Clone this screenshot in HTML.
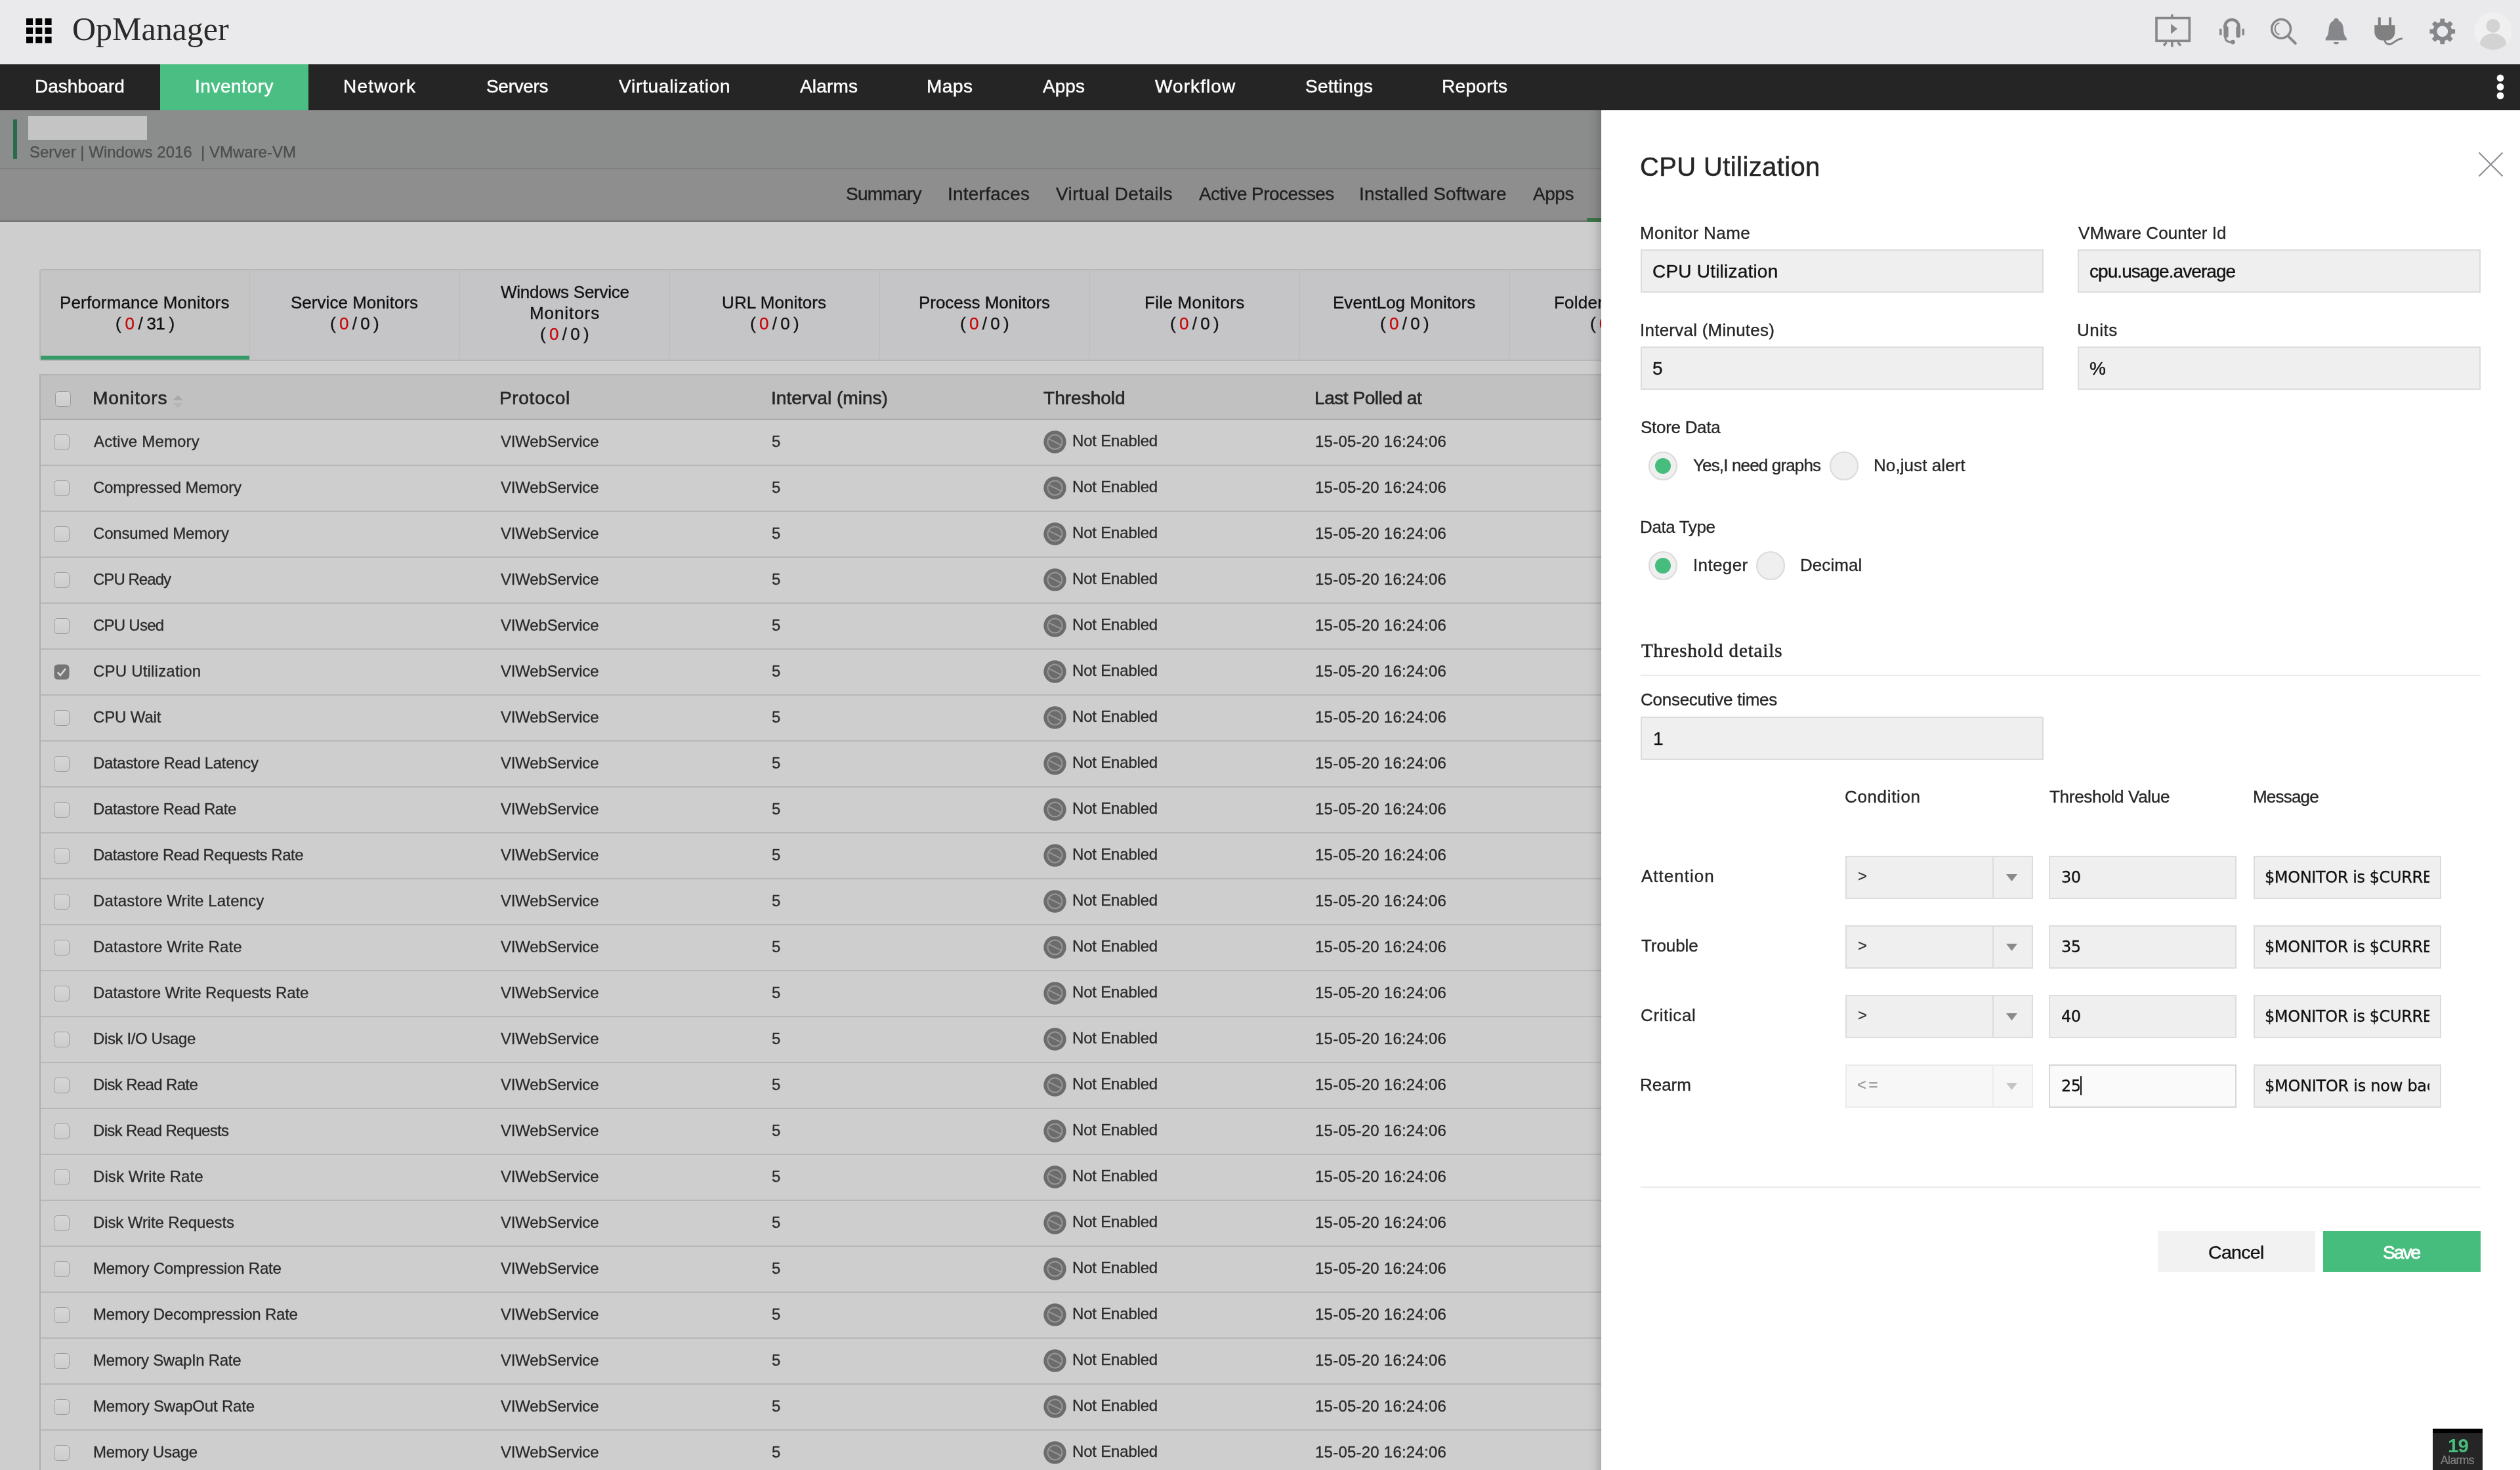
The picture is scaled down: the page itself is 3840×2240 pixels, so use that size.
<!DOCTYPE html>
<html lang="en"><head><meta charset="utf-8"><title>OpManager - CPU Utilization</title>
<style>
html,body{margin:0;padding:0}
body{width:3840px;height:2240px;position:relative;overflow:hidden;background:#cecece;font-family:"Liberation Sans",sans-serif;color:#222}
.a{position:absolute;box-sizing:border-box}
.t{will-change:transform;position:absolute;white-space:pre;line-height:1;margin:0;padding:0;font-weight:400}
svg.a{overflow:visible}
.serif{font-family:"Liberation Serif",serif}
.deja{font-family:"DejaVu Sans","Liberation Sans",sans-serif}
a.t{text-decoration:none}
</style></head>
<body>
<header>
<div class="a" style="left:0px;top:0px;width:3840px;height:97.7px;background:#eaeaec"></div>
<svg class="a" style="left:39.8px;top:28.2px" width="40" height="40" viewBox="0 0 40 40" fill="#000"><rect x="0" y="0" width="10" height="10"/><rect x="14.3" y="0" width="10" height="10"/><rect x="28.6" y="0" width="10" height="10"/><rect x="0" y="13.9" width="10" height="10"/><rect x="14.3" y="13.9" width="10" height="10"/><rect x="28.6" y="13.9" width="10" height="10"/><rect x="0" y="27.8" width="10" height="10"/><rect x="14.3" y="27.8" width="10" height="10"/><rect x="28.6" y="27.8" width="10" height="10"/></svg>
<span class="t serif" style="left:109.7px;top:19.2px;font-size:50px;letter-spacing:-0.03px;color:#2a2a2a;">OpManager</span>
<svg class="a" style="left:3270px;top:0" width="570" height="97" viewBox="3270 0 570 97"><g fill="none" stroke="#85878b"><rect x="3286" y="27.500" width="50.300" height="34.800" stroke-width="3.600"/><path d="M3309.800 22v4M3309.800 64v7.500M3301.500 64.500l-4.500 5M3318.500 64.500l4.500 5" stroke-width="3.600"/></g><path d="M3308 36.300v15.400l9.900 -7.700z" fill="#85878b"/><g fill="none" stroke="#85878b"><path d="M3390.300 43V40.700a10.600 10.600 0 0 1 21.200 0V43" stroke-width="4.500"/><path d="M3383.800 43.700v9.900M3418.200 43.700v9.900" stroke-width="3.500"/><path d="M3390.800 56c0 5.500 3.500 8.200 9.500 8.200" stroke-width="3"/></g><rect x="3388.400" y="39.800" width="7.200" height="17.800" rx="3" fill="#85878b"/><rect x="3407.300" y="39.800" width="6.600" height="17.800" rx="3" fill="#85878b"/><circle cx="3402.400" cy="64.100" r="3.400" fill="#85878b"/><g fill="none" stroke="#85878b"><circle cx="3476.100" cy="43.900" r="14.400" stroke-width="3.500"/><path d="M3473.300 34.800a9.400 9.400 0 0 0 0 18" stroke-width="2.200"/><path d="M3487.500 55.800L3497.800 66" stroke-width="4" stroke-linecap="round"/></g><path fill="#85878b" d="M3559.800 27.800c2.300 0 4 1.700 4.200 3.900c4.300 1.700 6.500 6.200 6.900 11.800c0.500 7.800 1.700 11.600 4.900 14.300v3.800h-32v-3.800c3.200 -2.700 4.400 -6.500 4.900 -14.300c0.400 -5.600 2.600 -10.100 6.900 -11.800c0.200 -2.200 1.900 -3.900 4.200 -3.900zM3555.900 64.100h8a4 3.500 0 0 1 -8 0z"/><g fill="#808080"><rect x="3623.800" y="26.400" width="4" height="13"/><rect x="3640.100" y="26.400" width="4" height="13"/><path d="M3618.300 38.300h31.200v10.500c0 6.500 -4.500 11.500 -10.500 12.800h-10.200c-6 -1.300 -10.500 -6.300 -10.500 -12.800z"/></g><path d="M3633.500 60.500c1 4.500 3.500 7.300 8 7c6.500 -0.500 9 -8.500 19.500 -8.600" fill="none" stroke="#808080" stroke-width="2.800"/><path fill-rule="evenodd" fill="#85878b" d="M3718.19 33.75L3718.48 28.58L3725.12 28.58L3725.41 33.75L3729.25 35.34L3733.11 31.90L3737.80 36.59L3734.36 40.45L3735.95 44.29L3741.12 44.58L3741.12 51.22L3735.95 51.51L3734.36 55.35L3737.80 59.21L3733.11 63.90L3729.25 60.46L3725.41 62.05L3725.12 67.22L3718.48 67.22L3718.19 62.05L3714.35 60.46L3710.49 63.90L3705.80 59.21L3709.24 55.35L3707.65 51.51L3702.48 51.22L3702.48 44.58L3707.65 44.29L3709.24 40.45L3705.80 36.59L3710.49 31.90L3714.35 35.34ZM3713.40 47.90a8.40 8.40 0 1 0 16.80 0a8.40 8.40 0 1 0 -16.80 0Z"/><defs><clipPath id="avc"><circle cx="3799" cy="47.400" r="28.500"/></clipPath></defs><circle cx="3799" cy="47.400" r="28.500" fill="#f0f0f1"/><g clip-path="url(#avc)" fill="#d3d3d4"><circle cx="3799" cy="39.400" r="10.500"/><ellipse cx="3799" cy="68.400" rx="20.500" ry="17.500"/></g></svg>
</header>
<nav>
<div class="a" style="left:0px;top:97.7px;width:3840px;height:70.1px;background:#252525"></div>
<div class="a" style="left:243.8px;top:97.7px;width:226px;height:70.1px;background:#4bbe83"></div>
<a class="t" style="left:53.2px;top:118.3px;font-size:28px;letter-spacing:-0.01px;color:#fff;-webkit-text-stroke:0.45px #fff;">Dashboard</a>
<a class="t" style="left:297.2px;top:118.3px;font-size:28px;letter-spacing:0.54px;color:#fff;-webkit-text-stroke:0.45px #fff;">Inventory</a>
<a class="t" style="left:523.0px;top:118.3px;font-size:28px;letter-spacing:1.22px;color:#fff;-webkit-text-stroke:0.45px #fff;">Network</a>
<a class="t" style="left:741.0px;top:118.3px;font-size:28px;letter-spacing:-0.31px;color:#fff;-webkit-text-stroke:0.45px #fff;">Servers</a>
<a class="t" style="left:943.0px;top:118.3px;font-size:28px;letter-spacing:0.75px;color:#fff;-webkit-text-stroke:0.45px #fff;">Virtualization</a>
<a class="t" style="left:1219.0px;top:118.3px;font-size:28px;letter-spacing:0.18px;color:#fff;-webkit-text-stroke:0.45px #fff;">Alarms</a>
<a class="t" style="left:1412.0px;top:118.3px;font-size:28px;letter-spacing:0.51px;color:#fff;-webkit-text-stroke:0.45px #fff;">Maps</a>
<a class="t" style="left:1589.0px;top:118.3px;font-size:28px;letter-spacing:0.06px;color:#fff;-webkit-text-stroke:0.45px #fff;">Apps</a>
<a class="t" style="left:1760.0px;top:118.3px;font-size:28px;letter-spacing:1.09px;color:#fff;-webkit-text-stroke:0.45px #fff;">Workflow</a>
<a class="t" style="left:1989.0px;top:118.3px;font-size:28px;letter-spacing:0.26px;color:#fff;-webkit-text-stroke:0.45px #fff;">Settings</a>
<a class="t" style="left:2197.0px;top:118.3px;font-size:28px;letter-spacing:0.33px;color:#fff;-webkit-text-stroke:0.45px #fff;">Reports</a>
<svg class="a" style="left:3802px;top:111.500px" width="16" height="44" viewBox="0 0 16 44" fill="#fff"><circle cx="8" cy="7" r="5.400"/><circle cx="8" cy="20.400" r="5.400"/><circle cx="8" cy="33.900" r="5.400"/></svg>
</nav>
<section>
<div class="a" style="left:0px;top:167.8px;width:3840px;height:89px;background:#8b8d8c"></div>
<div class="a" style="left:0px;top:256.3px;width:3840px;height:2px;background:#7f8180"></div>
<div class="a" style="left:0px;top:258.2px;width:3840px;height:78px;background:#8e8e8e"></div>
<div class="a" style="left:0px;top:333px;width:3840px;height:2.7px;background:#8a8c8b"></div>
<div class="a" style="left:0px;top:335.6px;width:3840px;height:2.4px;background:#707070"></div>
<div class="a" style="left:0px;top:338px;width:3840px;height:1px;background:#d3d3d3"></div>
<div class="a" style="left:19.8px;top:182px;width:6.2px;height:60px;background:#2a6b4a"></div>
<div class="a" style="left:42.9px;top:177px;width:181.3px;height:36px;background:#c4c4c4"></div>
<span class="t" style="left:45.0px;top:219.5px;font-size:24px;color:#4d4d4d;-webkit-text-stroke:0.31px #4d4d4d;">Server | Windows 2016  | VMware-VM</span>
<a class="t" style="left:1288.5px;top:281.8px;font-size:28px;letter-spacing:-0.72px;color:#1f1f1f;-webkit-text-stroke:0.36px #1f1f1f;">Summary</a>
<a class="t" style="left:1444.0px;top:281.8px;font-size:28px;letter-spacing:0.23px;color:#1f1f1f;-webkit-text-stroke:0.36px #1f1f1f;">Interfaces</a>
<a class="t" style="left:1609.0px;top:281.8px;font-size:28px;letter-spacing:0.38px;color:#1f1f1f;-webkit-text-stroke:0.36px #1f1f1f;">Virtual Details</a>
<a class="t" style="left:1826.7px;top:281.8px;font-size:28px;letter-spacing:-0.56px;color:#1f1f1f;-webkit-text-stroke:0.36px #1f1f1f;">Active Processes</a>
<a class="t" style="left:2071.0px;top:281.8px;font-size:28px;letter-spacing:0.12px;color:#1f1f1f;-webkit-text-stroke:0.36px #1f1f1f;">Installed Software</a>
<a class="t" style="left:2336.0px;top:281.8px;font-size:28px;letter-spacing:-0.44px;color:#1f1f1f;-webkit-text-stroke:0.36px #1f1f1f;">Apps</a>
<a class="t" style="left:2438.0px;top:281.8px;font-size:28px;letter-spacing:2.23px;color:#1f1f1f;-webkit-text-stroke:0.36px #1f1f1f;">Monitors</a>
<div class="a" style="left:2418px;top:332px;width:160px;height:5.9px;background:#3d7446"></div>
</section>
<section>
<div class="a" style="left:60.4px;top:410.3px;width:3000px;height:139.6px;background:#c5c5c7;border:2px solid #b7b7b9;border-radius:4px 0 0 4px"></div>
<div class="a" style="left:62px;top:412px;width:318.5px;height:136px;background:#c5c5c5"></div>
<div class="a" style="left:62px;top:541.7px;width:318.4px;height:6.2px;background:#359a68"></div>
<div class="a" style="left:379.6px;top:412px;width:1.6px;height:136px;background:#bcbcbe"></div>
<div class="a" style="left:699.6px;top:412px;width:1.6px;height:136px;background:#bcbcbe"></div>
<div class="a" style="left:1019.6px;top:412px;width:1.6px;height:136px;background:#bcbcbe"></div>
<div class="a" style="left:1339.6px;top:412px;width:1.6px;height:136px;background:#bcbcbe"></div>
<div class="a" style="left:1659.6px;top:412px;width:1.6px;height:136px;background:#bcbcbe"></div>
<div class="a" style="left:1979.6px;top:412px;width:1.6px;height:136px;background:#bcbcbe"></div>
<div class="a" style="left:2299.6px;top:412px;width:1.6px;height:136px;background:#bcbcbe"></div>
<div class="a" style="left:2619.6px;top:412px;width:1.6px;height:136px;background:#bcbcbe"></div>
<span class="t" style="left:91.0px;top:447.9px;font-size:26px;letter-spacing:0.14px;color:#111;-webkit-text-stroke:0.34px #111;">Performance Monitors</span>
<span class="t" style="left:175.8px;top:479.7px;font-size:26px;letter-spacing:-0.75px;color:#111;-webkit-text-stroke:0.34px #111;">( <b style="color:#c9060a;-webkit-text-stroke-color:#c9060a;font-weight:400">0</b> / 31 )</span>
<span class="t" style="left:443.3px;top:447.9px;font-size:26px;letter-spacing:0.03px;color:#111;-webkit-text-stroke:0.34px #111;">Service Monitors</span>
<span class="t" style="left:503.4px;top:479.7px;font-size:26px;letter-spacing:-0.97px;color:#111;-webkit-text-stroke:0.34px #111;">( <b style="color:#c9060a;-webkit-text-stroke-color:#c9060a;font-weight:400">0</b> / 0 )</span>
<span class="t" style="left:762.9px;top:432.0px;font-size:26px;letter-spacing:-0.24px;color:#111;-webkit-text-stroke:0.34px #111;">Windows Service</span>
<span class="t" style="left:806.6px;top:464.0px;font-size:26px;letter-spacing:0.93px;color:#111;-webkit-text-stroke:0.34px #111;">Monitors</span>
<span class="t" style="left:823.4px;top:496.0px;font-size:26px;letter-spacing:-0.97px;color:#111;-webkit-text-stroke:0.34px #111;">( <b style="color:#c9060a;-webkit-text-stroke-color:#c9060a;font-weight:400">0</b> / 0 )</span>
<span class="t" style="left:1100.2px;top:447.9px;font-size:26px;letter-spacing:0.10px;color:#111;-webkit-text-stroke:0.34px #111;">URL Monitors</span>
<span class="t" style="left:1143.4px;top:479.7px;font-size:26px;letter-spacing:-0.97px;color:#111;-webkit-text-stroke:0.34px #111;">( <b style="color:#c9060a;-webkit-text-stroke-color:#c9060a;font-weight:400">0</b> / 0 )</span>
<span class="t" style="left:1399.9px;top:447.9px;font-size:26px;letter-spacing:-0.05px;color:#111;-webkit-text-stroke:0.34px #111;">Process Monitors</span>
<span class="t" style="left:1463.4px;top:479.7px;font-size:26px;letter-spacing:-0.97px;color:#111;-webkit-text-stroke:0.34px #111;">( <b style="color:#c9060a;-webkit-text-stroke-color:#c9060a;font-weight:400">0</b> / 0 )</span>
<span class="t" style="left:1743.8px;top:447.9px;font-size:26px;letter-spacing:0.29px;color:#111;-webkit-text-stroke:0.34px #111;">File Monitors</span>
<span class="t" style="left:1783.4px;top:479.7px;font-size:26px;letter-spacing:-0.97px;color:#111;-webkit-text-stroke:0.34px #111;">( <b style="color:#c9060a;-webkit-text-stroke-color:#c9060a;font-weight:400">0</b> / 0 )</span>
<span class="t" style="left:2031.3px;top:447.9px;font-size:26px;letter-spacing:0.03px;color:#111;-webkit-text-stroke:0.34px #111;">EventLog Monitors</span>
<span class="t" style="left:2103.4px;top:479.7px;font-size:26px;letter-spacing:-0.97px;color:#111;-webkit-text-stroke:0.34px #111;">( <b style="color:#c9060a;-webkit-text-stroke-color:#c9060a;font-weight:400">0</b> / 0 )</span>
<span class="t" style="left:2367.5px;top:447.9px;font-size:26px;letter-spacing:0.24px;color:#111;-webkit-text-stroke:0.34px #111;">Folder Monitors</span>
<span class="t" style="left:2423.4px;top:479.7px;font-size:26px;letter-spacing:-0.97px;color:#111;-webkit-text-stroke:0.34px #111;">( <b style="color:#c9060a;-webkit-text-stroke-color:#c9060a;font-weight:400">0</b> / 0 )</span>
</section>
<section>
<div class="a" style="left:60.2px;top:569.8px;width:3000px;height:1700px;background:#cecece;border-left:2px solid #adadad"></div>
<div class="a" style="left:60.2px;top:569.8px;width:3000px;height:70.4px;background:#c1c1c1;border-top:2px solid #b3b3b3;border-bottom:2px solid #a9a9a9;border-left:2px solid #adadad"></div>
<div class="a" style="left:84.1px;top:595.9px;width:23.7px;height:23.8px;border:1.6px solid #9b9b9b;border-radius:5.500px;background:linear-gradient(#d6d6d6,#cdcdcd)"></div>
<span class="t" style="left:141.2px;top:592.0px;font-size:28.2px;letter-spacing:0.77px;color:#262626;-webkit-text-stroke:0.6px #262626;">Monitors</span>
<svg class="a" style="left:263px;top:601px" width="16" height="22" viewBox="0 0 16 22"><path d="M0.500 9L8 1l7.500 8z" fill="#a9a9a9"/><path d="M0.500 13L8 21l7.500 -8z" fill="#b7b7b7"/></svg>
<span class="t" style="left:761.0px;top:592.0px;font-size:28.2px;letter-spacing:0.55px;color:#262626;-webkit-text-stroke:0.6px #262626;">Protocol</span>
<span class="t" style="left:1175.0px;top:592.0px;font-size:28.2px;letter-spacing:-0.04px;color:#262626;-webkit-text-stroke:0.6px #262626;">Interval (mins)</span>
<span class="t" style="left:1590.0px;top:592.0px;font-size:28.2px;letter-spacing:-0.08px;color:#262626;-webkit-text-stroke:0.6px #262626;">Threshold</span>
<span class="t" style="left:2003.0px;top:592.0px;font-size:28.2px;letter-spacing:-0.54px;color:#262626;-webkit-text-stroke:0.6px #262626;">Last Polled at</span>
<div class="a" style="left:82.2px;top:662.2px;width:23.6px;height:23.6px;border:1.6px solid #9b9b9b;border-radius:5.500px;background:linear-gradient(#d6d6d6,#cdcdcd)"></div>
<span class="t" style="left:142.6px;top:661.4px;font-size:24px;letter-spacing:0.17px;color:#2a2a2a;-webkit-text-stroke:0.31px #2a2a2a;">Active Memory</span>
<span class="t" style="left:762.8px;top:661.4px;font-size:24px;letter-spacing:-0.19px;color:#2a2a2a;-webkit-text-stroke:0.31px #2a2a2a;">VIWebService</span>
<span class="t" style="left:1176.4px;top:661.4px;font-size:24px;color:#2a2a2a;-webkit-text-stroke:0.31px #2a2a2a;">5</span>
<svg class="a" style="left:1589.500px;top:655.7px" width="35" height="35" viewBox="0 0 35 35"><circle cx="17.500" cy="17.500" r="17.200" fill="#6c6c6c"/><circle cx="17.500" cy="17.500" r="11" fill="none" stroke="#989898" stroke-width="1.900"/><path d="M8.200 12.800L26.800 22.200" stroke="#989898" stroke-width="1.900"/></svg>
<span class="t" style="left:1634.2px;top:660.2px;font-size:24px;letter-spacing:-0.19px;color:#2a2a2a;-webkit-text-stroke:0.31px #2a2a2a;">Not Enabled</span>
<span class="t" style="left:2004.0px;top:661.4px;font-size:24px;letter-spacing:0.23px;color:#2a2a2a;-webkit-text-stroke:0.31px #2a2a2a;">15-05-20 16:24:06</span>
<div class="a" style="left:62px;top:708px;width:3000px;height:2px;background:#b7b7b7"></div>
<div class="a" style="left:82.2px;top:732.2px;width:23.6px;height:23.6px;border:1.6px solid #9b9b9b;border-radius:5.500px;background:linear-gradient(#d6d6d6,#cdcdcd)"></div>
<span class="t" style="left:141.6px;top:731.4px;font-size:24px;letter-spacing:-0.21px;color:#2a2a2a;-webkit-text-stroke:0.31px #2a2a2a;">Compressed Memory</span>
<span class="t" style="left:762.8px;top:731.4px;font-size:24px;letter-spacing:-0.19px;color:#2a2a2a;-webkit-text-stroke:0.31px #2a2a2a;">VIWebService</span>
<span class="t" style="left:1176.4px;top:731.4px;font-size:24px;color:#2a2a2a;-webkit-text-stroke:0.31px #2a2a2a;">5</span>
<svg class="a" style="left:1589.500px;top:725.7px" width="35" height="35" viewBox="0 0 35 35"><circle cx="17.500" cy="17.500" r="17.200" fill="#6c6c6c"/><circle cx="17.500" cy="17.500" r="11" fill="none" stroke="#989898" stroke-width="1.900"/><path d="M8.200 12.800L26.800 22.200" stroke="#989898" stroke-width="1.900"/></svg>
<span class="t" style="left:1634.2px;top:730.2px;font-size:24px;letter-spacing:-0.19px;color:#2a2a2a;-webkit-text-stroke:0.31px #2a2a2a;">Not Enabled</span>
<span class="t" style="left:2004.0px;top:731.4px;font-size:24px;letter-spacing:0.23px;color:#2a2a2a;-webkit-text-stroke:0.31px #2a2a2a;">15-05-20 16:24:06</span>
<div class="a" style="left:62px;top:778px;width:3000px;height:2px;background:#b7b7b7"></div>
<div class="a" style="left:82.2px;top:802.2px;width:23.6px;height:23.6px;border:1.6px solid #9b9b9b;border-radius:5.500px;background:linear-gradient(#d6d6d6,#cdcdcd)"></div>
<span class="t" style="left:141.6px;top:801.4px;font-size:24px;letter-spacing:-0.17px;color:#2a2a2a;-webkit-text-stroke:0.31px #2a2a2a;">Consumed Memory</span>
<span class="t" style="left:762.8px;top:801.4px;font-size:24px;letter-spacing:-0.19px;color:#2a2a2a;-webkit-text-stroke:0.31px #2a2a2a;">VIWebService</span>
<span class="t" style="left:1176.4px;top:801.4px;font-size:24px;color:#2a2a2a;-webkit-text-stroke:0.31px #2a2a2a;">5</span>
<svg class="a" style="left:1589.500px;top:795.7px" width="35" height="35" viewBox="0 0 35 35"><circle cx="17.500" cy="17.500" r="17.200" fill="#6c6c6c"/><circle cx="17.500" cy="17.500" r="11" fill="none" stroke="#989898" stroke-width="1.900"/><path d="M8.200 12.800L26.800 22.200" stroke="#989898" stroke-width="1.900"/></svg>
<span class="t" style="left:1634.2px;top:800.2px;font-size:24px;letter-spacing:-0.19px;color:#2a2a2a;-webkit-text-stroke:0.31px #2a2a2a;">Not Enabled</span>
<span class="t" style="left:2004.0px;top:801.4px;font-size:24px;letter-spacing:0.23px;color:#2a2a2a;-webkit-text-stroke:0.31px #2a2a2a;">15-05-20 16:24:06</span>
<div class="a" style="left:62px;top:848px;width:3000px;height:2px;background:#b7b7b7"></div>
<div class="a" style="left:82.2px;top:872.2px;width:23.6px;height:23.6px;border:1.6px solid #9b9b9b;border-radius:5.500px;background:linear-gradient(#d6d6d6,#cdcdcd)"></div>
<span class="t" style="left:141.6px;top:871.4px;font-size:24px;letter-spacing:-0.96px;color:#2a2a2a;-webkit-text-stroke:0.31px #2a2a2a;">CPU Ready</span>
<span class="t" style="left:762.8px;top:871.4px;font-size:24px;letter-spacing:-0.19px;color:#2a2a2a;-webkit-text-stroke:0.31px #2a2a2a;">VIWebService</span>
<span class="t" style="left:1176.4px;top:871.4px;font-size:24px;color:#2a2a2a;-webkit-text-stroke:0.31px #2a2a2a;">5</span>
<svg class="a" style="left:1589.500px;top:865.7px" width="35" height="35" viewBox="0 0 35 35"><circle cx="17.500" cy="17.500" r="17.200" fill="#6c6c6c"/><circle cx="17.500" cy="17.500" r="11" fill="none" stroke="#989898" stroke-width="1.900"/><path d="M8.200 12.800L26.800 22.200" stroke="#989898" stroke-width="1.900"/></svg>
<span class="t" style="left:1634.2px;top:870.2px;font-size:24px;letter-spacing:-0.19px;color:#2a2a2a;-webkit-text-stroke:0.31px #2a2a2a;">Not Enabled</span>
<span class="t" style="left:2004.0px;top:871.4px;font-size:24px;letter-spacing:0.23px;color:#2a2a2a;-webkit-text-stroke:0.31px #2a2a2a;">15-05-20 16:24:06</span>
<div class="a" style="left:62px;top:918px;width:3000px;height:2px;background:#b7b7b7"></div>
<div class="a" style="left:82.2px;top:942.2px;width:23.6px;height:23.6px;border:1.6px solid #9b9b9b;border-radius:5.500px;background:linear-gradient(#d6d6d6,#cdcdcd)"></div>
<span class="t" style="left:141.6px;top:941.4px;font-size:24px;letter-spacing:-0.75px;color:#2a2a2a;-webkit-text-stroke:0.31px #2a2a2a;">CPU Used</span>
<span class="t" style="left:762.8px;top:941.4px;font-size:24px;letter-spacing:-0.19px;color:#2a2a2a;-webkit-text-stroke:0.31px #2a2a2a;">VIWebService</span>
<span class="t" style="left:1176.4px;top:941.4px;font-size:24px;color:#2a2a2a;-webkit-text-stroke:0.31px #2a2a2a;">5</span>
<svg class="a" style="left:1589.500px;top:935.7px" width="35" height="35" viewBox="0 0 35 35"><circle cx="17.500" cy="17.500" r="17.200" fill="#6c6c6c"/><circle cx="17.500" cy="17.500" r="11" fill="none" stroke="#989898" stroke-width="1.900"/><path d="M8.200 12.800L26.800 22.200" stroke="#989898" stroke-width="1.900"/></svg>
<span class="t" style="left:1634.2px;top:940.2px;font-size:24px;letter-spacing:-0.19px;color:#2a2a2a;-webkit-text-stroke:0.31px #2a2a2a;">Not Enabled</span>
<span class="t" style="left:2004.0px;top:941.4px;font-size:24px;letter-spacing:0.23px;color:#2a2a2a;-webkit-text-stroke:0.31px #2a2a2a;">15-05-20 16:24:06</span>
<div class="a" style="left:62px;top:988px;width:3000px;height:2px;background:#b7b7b7"></div>
<svg class="a" style="left:82.200px;top:1012.2px" width="24" height="24" viewBox="0 0 24 24"><rect x="0.500" y="0.500" width="23" height="23" rx="5.500" fill="#757575"/><path d="M5.800 12.500l4.200 4.600l8 -10.200" fill="none" stroke="#d8d8d8" stroke-width="2.600"/></svg>
<span class="t" style="left:141.6px;top:1011.4px;font-size:24px;letter-spacing:0.20px;color:#2a2a2a;-webkit-text-stroke:0.31px #2a2a2a;">CPU Utilization</span>
<span class="t" style="left:762.8px;top:1011.4px;font-size:24px;letter-spacing:-0.19px;color:#2a2a2a;-webkit-text-stroke:0.31px #2a2a2a;">VIWebService</span>
<span class="t" style="left:1176.4px;top:1011.4px;font-size:24px;color:#2a2a2a;-webkit-text-stroke:0.31px #2a2a2a;">5</span>
<svg class="a" style="left:1589.500px;top:1005.7px" width="35" height="35" viewBox="0 0 35 35"><circle cx="17.500" cy="17.500" r="17.200" fill="#6c6c6c"/><circle cx="17.500" cy="17.500" r="11" fill="none" stroke="#989898" stroke-width="1.900"/><path d="M8.200 12.800L26.800 22.200" stroke="#989898" stroke-width="1.900"/></svg>
<span class="t" style="left:1634.2px;top:1010.2px;font-size:24px;letter-spacing:-0.19px;color:#2a2a2a;-webkit-text-stroke:0.31px #2a2a2a;">Not Enabled</span>
<span class="t" style="left:2004.0px;top:1011.4px;font-size:24px;letter-spacing:0.23px;color:#2a2a2a;-webkit-text-stroke:0.31px #2a2a2a;">15-05-20 16:24:06</span>
<div class="a" style="left:62px;top:1058px;width:3000px;height:2px;background:#b7b7b7"></div>
<div class="a" style="left:82.2px;top:1082.2px;width:23.6px;height:23.6px;border:1.6px solid #9b9b9b;border-radius:5.500px;background:linear-gradient(#d6d6d6,#cdcdcd)"></div>
<span class="t" style="left:141.6px;top:1081.4px;font-size:24px;letter-spacing:-0.14px;color:#2a2a2a;-webkit-text-stroke:0.31px #2a2a2a;">CPU Wait</span>
<span class="t" style="left:762.8px;top:1081.4px;font-size:24px;letter-spacing:-0.19px;color:#2a2a2a;-webkit-text-stroke:0.31px #2a2a2a;">VIWebService</span>
<span class="t" style="left:1176.4px;top:1081.4px;font-size:24px;color:#2a2a2a;-webkit-text-stroke:0.31px #2a2a2a;">5</span>
<svg class="a" style="left:1589.500px;top:1075.7px" width="35" height="35" viewBox="0 0 35 35"><circle cx="17.500" cy="17.500" r="17.200" fill="#6c6c6c"/><circle cx="17.500" cy="17.500" r="11" fill="none" stroke="#989898" stroke-width="1.900"/><path d="M8.200 12.800L26.800 22.200" stroke="#989898" stroke-width="1.900"/></svg>
<span class="t" style="left:1634.2px;top:1080.2px;font-size:24px;letter-spacing:-0.19px;color:#2a2a2a;-webkit-text-stroke:0.31px #2a2a2a;">Not Enabled</span>
<span class="t" style="left:2004.0px;top:1081.4px;font-size:24px;letter-spacing:0.23px;color:#2a2a2a;-webkit-text-stroke:0.31px #2a2a2a;">15-05-20 16:24:06</span>
<div class="a" style="left:62px;top:1128px;width:3000px;height:2px;background:#b7b7b7"></div>
<div class="a" style="left:82.2px;top:1152.2px;width:23.6px;height:23.6px;border:1.6px solid #9b9b9b;border-radius:5.500px;background:linear-gradient(#d6d6d6,#cdcdcd)"></div>
<span class="t" style="left:141.6px;top:1151.4px;font-size:24px;letter-spacing:-0.33px;color:#2a2a2a;-webkit-text-stroke:0.31px #2a2a2a;">Datastore Read Latency</span>
<span class="t" style="left:762.8px;top:1151.4px;font-size:24px;letter-spacing:-0.19px;color:#2a2a2a;-webkit-text-stroke:0.31px #2a2a2a;">VIWebService</span>
<span class="t" style="left:1176.4px;top:1151.4px;font-size:24px;color:#2a2a2a;-webkit-text-stroke:0.31px #2a2a2a;">5</span>
<svg class="a" style="left:1589.500px;top:1145.7px" width="35" height="35" viewBox="0 0 35 35"><circle cx="17.500" cy="17.500" r="17.200" fill="#6c6c6c"/><circle cx="17.500" cy="17.500" r="11" fill="none" stroke="#989898" stroke-width="1.900"/><path d="M8.200 12.800L26.800 22.200" stroke="#989898" stroke-width="1.900"/></svg>
<span class="t" style="left:1634.2px;top:1150.2px;font-size:24px;letter-spacing:-0.19px;color:#2a2a2a;-webkit-text-stroke:0.31px #2a2a2a;">Not Enabled</span>
<span class="t" style="left:2004.0px;top:1151.4px;font-size:24px;letter-spacing:0.23px;color:#2a2a2a;-webkit-text-stroke:0.31px #2a2a2a;">15-05-20 16:24:06</span>
<div class="a" style="left:62px;top:1198px;width:3000px;height:2px;background:#b7b7b7"></div>
<div class="a" style="left:82.2px;top:1222.2px;width:23.6px;height:23.6px;border:1.6px solid #9b9b9b;border-radius:5.500px;background:linear-gradient(#d6d6d6,#cdcdcd)"></div>
<span class="t" style="left:141.6px;top:1221.4px;font-size:24px;letter-spacing:-0.39px;color:#2a2a2a;-webkit-text-stroke:0.31px #2a2a2a;">Datastore Read Rate</span>
<span class="t" style="left:762.8px;top:1221.4px;font-size:24px;letter-spacing:-0.19px;color:#2a2a2a;-webkit-text-stroke:0.31px #2a2a2a;">VIWebService</span>
<span class="t" style="left:1176.4px;top:1221.4px;font-size:24px;color:#2a2a2a;-webkit-text-stroke:0.31px #2a2a2a;">5</span>
<svg class="a" style="left:1589.500px;top:1215.7px" width="35" height="35" viewBox="0 0 35 35"><circle cx="17.500" cy="17.500" r="17.200" fill="#6c6c6c"/><circle cx="17.500" cy="17.500" r="11" fill="none" stroke="#989898" stroke-width="1.900"/><path d="M8.200 12.800L26.800 22.200" stroke="#989898" stroke-width="1.900"/></svg>
<span class="t" style="left:1634.2px;top:1220.2px;font-size:24px;letter-spacing:-0.19px;color:#2a2a2a;-webkit-text-stroke:0.31px #2a2a2a;">Not Enabled</span>
<span class="t" style="left:2004.0px;top:1221.4px;font-size:24px;letter-spacing:0.23px;color:#2a2a2a;-webkit-text-stroke:0.31px #2a2a2a;">15-05-20 16:24:06</span>
<div class="a" style="left:62px;top:1268px;width:3000px;height:2px;background:#b7b7b7"></div>
<div class="a" style="left:82.2px;top:1292.2px;width:23.6px;height:23.6px;border:1.6px solid #9b9b9b;border-radius:5.500px;background:linear-gradient(#d6d6d6,#cdcdcd)"></div>
<span class="t" style="left:141.6px;top:1291.4px;font-size:24px;letter-spacing:-0.48px;color:#2a2a2a;-webkit-text-stroke:0.31px #2a2a2a;">Datastore Read Requests Rate</span>
<span class="t" style="left:762.8px;top:1291.4px;font-size:24px;letter-spacing:-0.19px;color:#2a2a2a;-webkit-text-stroke:0.31px #2a2a2a;">VIWebService</span>
<span class="t" style="left:1176.4px;top:1291.4px;font-size:24px;color:#2a2a2a;-webkit-text-stroke:0.31px #2a2a2a;">5</span>
<svg class="a" style="left:1589.500px;top:1285.7px" width="35" height="35" viewBox="0 0 35 35"><circle cx="17.500" cy="17.500" r="17.200" fill="#6c6c6c"/><circle cx="17.500" cy="17.500" r="11" fill="none" stroke="#989898" stroke-width="1.900"/><path d="M8.200 12.800L26.800 22.200" stroke="#989898" stroke-width="1.900"/></svg>
<span class="t" style="left:1634.2px;top:1290.2px;font-size:24px;letter-spacing:-0.19px;color:#2a2a2a;-webkit-text-stroke:0.31px #2a2a2a;">Not Enabled</span>
<span class="t" style="left:2004.0px;top:1291.4px;font-size:24px;letter-spacing:0.23px;color:#2a2a2a;-webkit-text-stroke:0.31px #2a2a2a;">15-05-20 16:24:06</span>
<div class="a" style="left:62px;top:1338px;width:3000px;height:2px;background:#b7b7b7"></div>
<div class="a" style="left:82.2px;top:1362.2px;width:23.6px;height:23.6px;border:1.6px solid #9b9b9b;border-radius:5.500px;background:linear-gradient(#d6d6d6,#cdcdcd)"></div>
<span class="t" style="left:141.6px;top:1361.4px;font-size:24px;letter-spacing:0.15px;color:#2a2a2a;-webkit-text-stroke:0.31px #2a2a2a;">Datastore Write Latency</span>
<span class="t" style="left:762.8px;top:1361.4px;font-size:24px;letter-spacing:-0.19px;color:#2a2a2a;-webkit-text-stroke:0.31px #2a2a2a;">VIWebService</span>
<span class="t" style="left:1176.4px;top:1361.4px;font-size:24px;color:#2a2a2a;-webkit-text-stroke:0.31px #2a2a2a;">5</span>
<svg class="a" style="left:1589.500px;top:1355.7px" width="35" height="35" viewBox="0 0 35 35"><circle cx="17.500" cy="17.500" r="17.200" fill="#6c6c6c"/><circle cx="17.500" cy="17.500" r="11" fill="none" stroke="#989898" stroke-width="1.900"/><path d="M8.200 12.800L26.800 22.200" stroke="#989898" stroke-width="1.900"/></svg>
<span class="t" style="left:1634.2px;top:1360.2px;font-size:24px;letter-spacing:-0.19px;color:#2a2a2a;-webkit-text-stroke:0.31px #2a2a2a;">Not Enabled</span>
<span class="t" style="left:2004.0px;top:1361.4px;font-size:24px;letter-spacing:0.23px;color:#2a2a2a;-webkit-text-stroke:0.31px #2a2a2a;">15-05-20 16:24:06</span>
<div class="a" style="left:62px;top:1408px;width:3000px;height:2px;background:#b7b7b7"></div>
<div class="a" style="left:82.2px;top:1432.2px;width:23.6px;height:23.6px;border:1.6px solid #9b9b9b;border-radius:5.500px;background:linear-gradient(#d6d6d6,#cdcdcd)"></div>
<span class="t" style="left:141.6px;top:1431.4px;font-size:24px;letter-spacing:0.16px;color:#2a2a2a;-webkit-text-stroke:0.31px #2a2a2a;">Datastore Write Rate</span>
<span class="t" style="left:762.8px;top:1431.4px;font-size:24px;letter-spacing:-0.19px;color:#2a2a2a;-webkit-text-stroke:0.31px #2a2a2a;">VIWebService</span>
<span class="t" style="left:1176.4px;top:1431.4px;font-size:24px;color:#2a2a2a;-webkit-text-stroke:0.31px #2a2a2a;">5</span>
<svg class="a" style="left:1589.500px;top:1425.7px" width="35" height="35" viewBox="0 0 35 35"><circle cx="17.500" cy="17.500" r="17.200" fill="#6c6c6c"/><circle cx="17.500" cy="17.500" r="11" fill="none" stroke="#989898" stroke-width="1.900"/><path d="M8.200 12.800L26.800 22.200" stroke="#989898" stroke-width="1.900"/></svg>
<span class="t" style="left:1634.2px;top:1430.2px;font-size:24px;letter-spacing:-0.19px;color:#2a2a2a;-webkit-text-stroke:0.31px #2a2a2a;">Not Enabled</span>
<span class="t" style="left:2004.0px;top:1431.4px;font-size:24px;letter-spacing:0.23px;color:#2a2a2a;-webkit-text-stroke:0.31px #2a2a2a;">15-05-20 16:24:06</span>
<div class="a" style="left:62px;top:1478px;width:3000px;height:2px;background:#b7b7b7"></div>
<div class="a" style="left:82.2px;top:1502.2px;width:23.6px;height:23.6px;border:1.6px solid #9b9b9b;border-radius:5.500px;background:linear-gradient(#d6d6d6,#cdcdcd)"></div>
<span class="t" style="left:141.6px;top:1501.4px;font-size:24px;letter-spacing:-0.12px;color:#2a2a2a;-webkit-text-stroke:0.31px #2a2a2a;">Datastore Write Requests Rate</span>
<span class="t" style="left:762.8px;top:1501.4px;font-size:24px;letter-spacing:-0.19px;color:#2a2a2a;-webkit-text-stroke:0.31px #2a2a2a;">VIWebService</span>
<span class="t" style="left:1176.4px;top:1501.4px;font-size:24px;color:#2a2a2a;-webkit-text-stroke:0.31px #2a2a2a;">5</span>
<svg class="a" style="left:1589.500px;top:1495.7px" width="35" height="35" viewBox="0 0 35 35"><circle cx="17.500" cy="17.500" r="17.200" fill="#6c6c6c"/><circle cx="17.500" cy="17.500" r="11" fill="none" stroke="#989898" stroke-width="1.900"/><path d="M8.200 12.800L26.800 22.200" stroke="#989898" stroke-width="1.900"/></svg>
<span class="t" style="left:1634.2px;top:1500.2px;font-size:24px;letter-spacing:-0.19px;color:#2a2a2a;-webkit-text-stroke:0.31px #2a2a2a;">Not Enabled</span>
<span class="t" style="left:2004.0px;top:1501.4px;font-size:24px;letter-spacing:0.23px;color:#2a2a2a;-webkit-text-stroke:0.31px #2a2a2a;">15-05-20 16:24:06</span>
<div class="a" style="left:62px;top:1548px;width:3000px;height:2px;background:#b7b7b7"></div>
<div class="a" style="left:82.2px;top:1572.2px;width:23.6px;height:23.6px;border:1.6px solid #9b9b9b;border-radius:5.500px;background:linear-gradient(#d6d6d6,#cdcdcd)"></div>
<span class="t" style="left:141.6px;top:1571.4px;font-size:24px;letter-spacing:-0.39px;color:#2a2a2a;-webkit-text-stroke:0.31px #2a2a2a;">Disk I/O Usage</span>
<span class="t" style="left:762.8px;top:1571.4px;font-size:24px;letter-spacing:-0.19px;color:#2a2a2a;-webkit-text-stroke:0.31px #2a2a2a;">VIWebService</span>
<span class="t" style="left:1176.4px;top:1571.4px;font-size:24px;color:#2a2a2a;-webkit-text-stroke:0.31px #2a2a2a;">5</span>
<svg class="a" style="left:1589.500px;top:1565.7px" width="35" height="35" viewBox="0 0 35 35"><circle cx="17.500" cy="17.500" r="17.200" fill="#6c6c6c"/><circle cx="17.500" cy="17.500" r="11" fill="none" stroke="#989898" stroke-width="1.900"/><path d="M8.200 12.800L26.800 22.200" stroke="#989898" stroke-width="1.900"/></svg>
<span class="t" style="left:1634.2px;top:1570.2px;font-size:24px;letter-spacing:-0.19px;color:#2a2a2a;-webkit-text-stroke:0.31px #2a2a2a;">Not Enabled</span>
<span class="t" style="left:2004.0px;top:1571.4px;font-size:24px;letter-spacing:0.23px;color:#2a2a2a;-webkit-text-stroke:0.31px #2a2a2a;">15-05-20 16:24:06</span>
<div class="a" style="left:62px;top:1618px;width:3000px;height:2px;background:#b7b7b7"></div>
<div class="a" style="left:82.2px;top:1642.2px;width:23.6px;height:23.6px;border:1.6px solid #9b9b9b;border-radius:5.500px;background:linear-gradient(#d6d6d6,#cdcdcd)"></div>
<span class="t" style="left:141.6px;top:1641.4px;font-size:24px;letter-spacing:-0.64px;color:#2a2a2a;-webkit-text-stroke:0.31px #2a2a2a;">Disk Read Rate</span>
<span class="t" style="left:762.8px;top:1641.4px;font-size:24px;letter-spacing:-0.19px;color:#2a2a2a;-webkit-text-stroke:0.31px #2a2a2a;">VIWebService</span>
<span class="t" style="left:1176.4px;top:1641.4px;font-size:24px;color:#2a2a2a;-webkit-text-stroke:0.31px #2a2a2a;">5</span>
<svg class="a" style="left:1589.500px;top:1635.7px" width="35" height="35" viewBox="0 0 35 35"><circle cx="17.500" cy="17.500" r="17.200" fill="#6c6c6c"/><circle cx="17.500" cy="17.500" r="11" fill="none" stroke="#989898" stroke-width="1.900"/><path d="M8.200 12.800L26.800 22.200" stroke="#989898" stroke-width="1.900"/></svg>
<span class="t" style="left:1634.2px;top:1640.2px;font-size:24px;letter-spacing:-0.19px;color:#2a2a2a;-webkit-text-stroke:0.31px #2a2a2a;">Not Enabled</span>
<span class="t" style="left:2004.0px;top:1641.4px;font-size:24px;letter-spacing:0.23px;color:#2a2a2a;-webkit-text-stroke:0.31px #2a2a2a;">15-05-20 16:24:06</span>
<div class="a" style="left:62px;top:1688px;width:3000px;height:2px;background:#b7b7b7"></div>
<div class="a" style="left:82.2px;top:1712.2px;width:23.6px;height:23.6px;border:1.6px solid #9b9b9b;border-radius:5.500px;background:linear-gradient(#d6d6d6,#cdcdcd)"></div>
<span class="t" style="left:141.6px;top:1711.4px;font-size:24px;letter-spacing:-0.69px;color:#2a2a2a;-webkit-text-stroke:0.31px #2a2a2a;">Disk Read Requests</span>
<span class="t" style="left:762.8px;top:1711.4px;font-size:24px;letter-spacing:-0.19px;color:#2a2a2a;-webkit-text-stroke:0.31px #2a2a2a;">VIWebService</span>
<span class="t" style="left:1176.4px;top:1711.4px;font-size:24px;color:#2a2a2a;-webkit-text-stroke:0.31px #2a2a2a;">5</span>
<svg class="a" style="left:1589.500px;top:1705.7px" width="35" height="35" viewBox="0 0 35 35"><circle cx="17.500" cy="17.500" r="17.200" fill="#6c6c6c"/><circle cx="17.500" cy="17.500" r="11" fill="none" stroke="#989898" stroke-width="1.900"/><path d="M8.200 12.800L26.800 22.200" stroke="#989898" stroke-width="1.900"/></svg>
<span class="t" style="left:1634.2px;top:1710.2px;font-size:24px;letter-spacing:-0.19px;color:#2a2a2a;-webkit-text-stroke:0.31px #2a2a2a;">Not Enabled</span>
<span class="t" style="left:2004.0px;top:1711.4px;font-size:24px;letter-spacing:0.23px;color:#2a2a2a;-webkit-text-stroke:0.31px #2a2a2a;">15-05-20 16:24:06</span>
<div class="a" style="left:62px;top:1758px;width:3000px;height:2px;background:#b7b7b7"></div>
<div class="a" style="left:82.2px;top:1782.2px;width:23.6px;height:23.6px;border:1.6px solid #9b9b9b;border-radius:5.500px;background:linear-gradient(#d6d6d6,#cdcdcd)"></div>
<span class="t" style="left:141.6px;top:1781.4px;font-size:24px;letter-spacing:0.10px;color:#2a2a2a;-webkit-text-stroke:0.31px #2a2a2a;">Disk Write Rate</span>
<span class="t" style="left:762.8px;top:1781.4px;font-size:24px;letter-spacing:-0.19px;color:#2a2a2a;-webkit-text-stroke:0.31px #2a2a2a;">VIWebService</span>
<span class="t" style="left:1176.4px;top:1781.4px;font-size:24px;color:#2a2a2a;-webkit-text-stroke:0.31px #2a2a2a;">5</span>
<svg class="a" style="left:1589.500px;top:1775.7px" width="35" height="35" viewBox="0 0 35 35"><circle cx="17.500" cy="17.500" r="17.200" fill="#6c6c6c"/><circle cx="17.500" cy="17.500" r="11" fill="none" stroke="#989898" stroke-width="1.900"/><path d="M8.200 12.800L26.800 22.200" stroke="#989898" stroke-width="1.900"/></svg>
<span class="t" style="left:1634.2px;top:1780.2px;font-size:24px;letter-spacing:-0.19px;color:#2a2a2a;-webkit-text-stroke:0.31px #2a2a2a;">Not Enabled</span>
<span class="t" style="left:2004.0px;top:1781.4px;font-size:24px;letter-spacing:0.23px;color:#2a2a2a;-webkit-text-stroke:0.31px #2a2a2a;">15-05-20 16:24:06</span>
<div class="a" style="left:62px;top:1828px;width:3000px;height:2px;background:#b7b7b7"></div>
<div class="a" style="left:82.2px;top:1852.2px;width:23.6px;height:23.6px;border:1.6px solid #9b9b9b;border-radius:5.500px;background:linear-gradient(#d6d6d6,#cdcdcd)"></div>
<span class="t" style="left:141.6px;top:1851.4px;font-size:24px;letter-spacing:-0.11px;color:#2a2a2a;-webkit-text-stroke:0.31px #2a2a2a;">Disk Write Requests</span>
<span class="t" style="left:762.8px;top:1851.4px;font-size:24px;letter-spacing:-0.19px;color:#2a2a2a;-webkit-text-stroke:0.31px #2a2a2a;">VIWebService</span>
<span class="t" style="left:1176.4px;top:1851.4px;font-size:24px;color:#2a2a2a;-webkit-text-stroke:0.31px #2a2a2a;">5</span>
<svg class="a" style="left:1589.500px;top:1845.7px" width="35" height="35" viewBox="0 0 35 35"><circle cx="17.500" cy="17.500" r="17.200" fill="#6c6c6c"/><circle cx="17.500" cy="17.500" r="11" fill="none" stroke="#989898" stroke-width="1.900"/><path d="M8.200 12.800L26.800 22.200" stroke="#989898" stroke-width="1.900"/></svg>
<span class="t" style="left:1634.2px;top:1850.2px;font-size:24px;letter-spacing:-0.19px;color:#2a2a2a;-webkit-text-stroke:0.31px #2a2a2a;">Not Enabled</span>
<span class="t" style="left:2004.0px;top:1851.4px;font-size:24px;letter-spacing:0.23px;color:#2a2a2a;-webkit-text-stroke:0.31px #2a2a2a;">15-05-20 16:24:06</span>
<div class="a" style="left:62px;top:1898px;width:3000px;height:2px;background:#b7b7b7"></div>
<div class="a" style="left:82.2px;top:1922.2px;width:23.6px;height:23.6px;border:1.6px solid #9b9b9b;border-radius:5.500px;background:linear-gradient(#d6d6d6,#cdcdcd)"></div>
<span class="t" style="left:141.6px;top:1921.4px;font-size:24px;letter-spacing:-0.24px;color:#2a2a2a;-webkit-text-stroke:0.31px #2a2a2a;">Memory Compression Rate</span>
<span class="t" style="left:762.8px;top:1921.4px;font-size:24px;letter-spacing:-0.19px;color:#2a2a2a;-webkit-text-stroke:0.31px #2a2a2a;">VIWebService</span>
<span class="t" style="left:1176.4px;top:1921.4px;font-size:24px;color:#2a2a2a;-webkit-text-stroke:0.31px #2a2a2a;">5</span>
<svg class="a" style="left:1589.500px;top:1915.7px" width="35" height="35" viewBox="0 0 35 35"><circle cx="17.500" cy="17.500" r="17.200" fill="#6c6c6c"/><circle cx="17.500" cy="17.500" r="11" fill="none" stroke="#989898" stroke-width="1.900"/><path d="M8.200 12.800L26.800 22.200" stroke="#989898" stroke-width="1.900"/></svg>
<span class="t" style="left:1634.2px;top:1920.2px;font-size:24px;letter-spacing:-0.19px;color:#2a2a2a;-webkit-text-stroke:0.31px #2a2a2a;">Not Enabled</span>
<span class="t" style="left:2004.0px;top:1921.4px;font-size:24px;letter-spacing:0.23px;color:#2a2a2a;-webkit-text-stroke:0.31px #2a2a2a;">15-05-20 16:24:06</span>
<div class="a" style="left:62px;top:1968px;width:3000px;height:2px;background:#b7b7b7"></div>
<div class="a" style="left:82.2px;top:1992.2px;width:23.6px;height:23.6px;border:1.6px solid #9b9b9b;border-radius:5.500px;background:linear-gradient(#d6d6d6,#cdcdcd)"></div>
<span class="t" style="left:141.6px;top:1991.4px;font-size:24px;letter-spacing:-0.23px;color:#2a2a2a;-webkit-text-stroke:0.31px #2a2a2a;">Memory Decompression Rate</span>
<span class="t" style="left:762.8px;top:1991.4px;font-size:24px;letter-spacing:-0.19px;color:#2a2a2a;-webkit-text-stroke:0.31px #2a2a2a;">VIWebService</span>
<span class="t" style="left:1176.4px;top:1991.4px;font-size:24px;color:#2a2a2a;-webkit-text-stroke:0.31px #2a2a2a;">5</span>
<svg class="a" style="left:1589.500px;top:1985.7px" width="35" height="35" viewBox="0 0 35 35"><circle cx="17.500" cy="17.500" r="17.200" fill="#6c6c6c"/><circle cx="17.500" cy="17.500" r="11" fill="none" stroke="#989898" stroke-width="1.900"/><path d="M8.200 12.800L26.800 22.200" stroke="#989898" stroke-width="1.900"/></svg>
<span class="t" style="left:1634.2px;top:1990.2px;font-size:24px;letter-spacing:-0.19px;color:#2a2a2a;-webkit-text-stroke:0.31px #2a2a2a;">Not Enabled</span>
<span class="t" style="left:2004.0px;top:1991.4px;font-size:24px;letter-spacing:0.23px;color:#2a2a2a;-webkit-text-stroke:0.31px #2a2a2a;">15-05-20 16:24:06</span>
<div class="a" style="left:62px;top:2038px;width:3000px;height:2px;background:#b7b7b7"></div>
<div class="a" style="left:82.2px;top:2062.2px;width:23.6px;height:23.6px;border:1.6px solid #9b9b9b;border-radius:5.500px;background:linear-gradient(#d6d6d6,#cdcdcd)"></div>
<span class="t" style="left:141.6px;top:2061.4px;font-size:24px;letter-spacing:-0.31px;color:#2a2a2a;-webkit-text-stroke:0.31px #2a2a2a;">Memory SwapIn Rate</span>
<span class="t" style="left:762.8px;top:2061.4px;font-size:24px;letter-spacing:-0.19px;color:#2a2a2a;-webkit-text-stroke:0.31px #2a2a2a;">VIWebService</span>
<span class="t" style="left:1176.4px;top:2061.4px;font-size:24px;color:#2a2a2a;-webkit-text-stroke:0.31px #2a2a2a;">5</span>
<svg class="a" style="left:1589.500px;top:2055.7px" width="35" height="35" viewBox="0 0 35 35"><circle cx="17.500" cy="17.500" r="17.200" fill="#6c6c6c"/><circle cx="17.500" cy="17.500" r="11" fill="none" stroke="#989898" stroke-width="1.900"/><path d="M8.200 12.800L26.800 22.200" stroke="#989898" stroke-width="1.900"/></svg>
<span class="t" style="left:1634.2px;top:2060.2px;font-size:24px;letter-spacing:-0.19px;color:#2a2a2a;-webkit-text-stroke:0.31px #2a2a2a;">Not Enabled</span>
<span class="t" style="left:2004.0px;top:2061.4px;font-size:24px;letter-spacing:0.23px;color:#2a2a2a;-webkit-text-stroke:0.31px #2a2a2a;">15-05-20 16:24:06</span>
<div class="a" style="left:62px;top:2108px;width:3000px;height:2px;background:#b7b7b7"></div>
<div class="a" style="left:82.2px;top:2132.2px;width:23.6px;height:23.6px;border:1.6px solid #9b9b9b;border-radius:5.500px;background:linear-gradient(#d6d6d6,#cdcdcd)"></div>
<span class="t" style="left:141.6px;top:2131.4px;font-size:24px;letter-spacing:-0.19px;color:#2a2a2a;-webkit-text-stroke:0.31px #2a2a2a;">Memory SwapOut Rate</span>
<span class="t" style="left:762.8px;top:2131.4px;font-size:24px;letter-spacing:-0.19px;color:#2a2a2a;-webkit-text-stroke:0.31px #2a2a2a;">VIWebService</span>
<span class="t" style="left:1176.4px;top:2131.4px;font-size:24px;color:#2a2a2a;-webkit-text-stroke:0.31px #2a2a2a;">5</span>
<svg class="a" style="left:1589.500px;top:2125.7px" width="35" height="35" viewBox="0 0 35 35"><circle cx="17.500" cy="17.500" r="17.200" fill="#6c6c6c"/><circle cx="17.500" cy="17.500" r="11" fill="none" stroke="#989898" stroke-width="1.900"/><path d="M8.200 12.800L26.800 22.200" stroke="#989898" stroke-width="1.900"/></svg>
<span class="t" style="left:1634.2px;top:2130.2px;font-size:24px;letter-spacing:-0.19px;color:#2a2a2a;-webkit-text-stroke:0.31px #2a2a2a;">Not Enabled</span>
<span class="t" style="left:2004.0px;top:2131.4px;font-size:24px;letter-spacing:0.23px;color:#2a2a2a;-webkit-text-stroke:0.31px #2a2a2a;">15-05-20 16:24:06</span>
<div class="a" style="left:62px;top:2178px;width:3000px;height:2px;background:#b7b7b7"></div>
<div class="a" style="left:82.2px;top:2202.2px;width:23.6px;height:23.6px;border:1.6px solid #9b9b9b;border-radius:5.500px;background:linear-gradient(#d6d6d6,#cdcdcd)"></div>
<span class="t" style="left:141.6px;top:2201.4px;font-size:24px;letter-spacing:-0.32px;color:#2a2a2a;-webkit-text-stroke:0.31px #2a2a2a;">Memory Usage</span>
<span class="t" style="left:762.8px;top:2201.4px;font-size:24px;letter-spacing:-0.19px;color:#2a2a2a;-webkit-text-stroke:0.31px #2a2a2a;">VIWebService</span>
<span class="t" style="left:1176.4px;top:2201.4px;font-size:24px;color:#2a2a2a;-webkit-text-stroke:0.31px #2a2a2a;">5</span>
<svg class="a" style="left:1589.500px;top:2195.7px" width="35" height="35" viewBox="0 0 35 35"><circle cx="17.500" cy="17.500" r="17.200" fill="#6c6c6c"/><circle cx="17.500" cy="17.500" r="11" fill="none" stroke="#989898" stroke-width="1.900"/><path d="M8.200 12.800L26.800 22.200" stroke="#989898" stroke-width="1.900"/></svg>
<span class="t" style="left:1634.2px;top:2200.2px;font-size:24px;letter-spacing:-0.19px;color:#2a2a2a;-webkit-text-stroke:0.31px #2a2a2a;">Not Enabled</span>
<span class="t" style="left:2004.0px;top:2201.4px;font-size:24px;letter-spacing:0.23px;color:#2a2a2a;-webkit-text-stroke:0.31px #2a2a2a;">15-05-20 16:24:06</span>
</section>
<aside>
<div class="a" style="left:2340px;top:167.8px;width:1500px;height:2072.2px;overflow:hidden"><div class="a" style="left:100px;top:-40px;width:1400px;height:2200px;background:#fff;box-shadow:-3px 0 16px rgba(0,0,0,0.24)"></div></div>
<h2 class="t" style="left:2498.8px;top:233.6px;font-size:40px;letter-spacing:0.38px;color:#262626;-webkit-text-stroke:0.52px #262626;">CPU Utilization</h2>
<svg class="a" style="left:3775.600px;top:231.400px" width="40" height="40" viewBox="0 0 40 40"><path d="M1.500 1.500L37.500 37.500M37.500 1.500L1.500 37.500" stroke="#8b8e92" stroke-width="2.100" fill="none"/></svg>
<label class="t" style="left:2498.8px;top:342.4px;font-size:26px;letter-spacing:0.40px;color:#262626;-webkit-text-stroke:0.34px #262626;">Monitor Name</label>
<div class="a" style="left:2500px;top:380.2px;width:614px;height:65.4px;background:#efefef;border:2px solid #dcdcdc"></div>
<span class="t" style="left:2517.9px;top:400.0px;font-size:28px;letter-spacing:0.21px;color:#111;-webkit-text-stroke:0.36px #111;">CPU Utilization</span>
<label class="t" style="left:3166.8px;top:342.4px;font-size:26px;letter-spacing:0.10px;color:#262626;-webkit-text-stroke:0.34px #262626;">VMware Counter Id</label>
<div class="a" style="left:3166px;top:380.2px;width:614px;height:65.4px;background:#efefef;border:2px solid #dcdcdc"></div>
<span class="t" style="left:3183.5px;top:400.0px;font-size:28px;letter-spacing:-0.94px;color:#111;-webkit-text-stroke:0.36px #111;">cpu.usage.average</span>
<label class="t" style="left:2498.8px;top:490.2px;font-size:26px;letter-spacing:0.24px;color:#262626;-webkit-text-stroke:0.34px #262626;">Interval (Minutes)</label>
<div class="a" style="left:2500px;top:528.2px;width:614px;height:65.4px;background:#efefef;border:2px solid #dcdcdc"></div>
<span class="t" style="left:2517.5px;top:548.0px;font-size:28px;color:#111;-webkit-text-stroke:0.36px #111;">5</span>
<label class="t" style="left:3164.8px;top:490.2px;font-size:26px;letter-spacing:0.49px;color:#262626;-webkit-text-stroke:0.34px #262626;">Units</label>
<div class="a" style="left:3166px;top:528.2px;width:614px;height:65.4px;background:#efefef;border:2px solid #dcdcdc"></div>
<span class="t" style="left:3183.5px;top:548.0px;font-size:28px;color:#111;-webkit-text-stroke:0.36px #111;">%</span>
<label class="t" style="left:2499.8px;top:638.0px;font-size:26px;letter-spacing:-0.29px;color:#262626;-webkit-text-stroke:0.34px #262626;">Store Data</label>
<svg class="a" style="left:2511px;top:687px" width="46" height="46" viewBox="0 0 46 46"><circle cx="23" cy="23" r="21" fill="#efefef" stroke="#dcdcdc" stroke-width="2.200"/><circle cx="23" cy="23" r="12" fill="#47bd7d"/></svg>
<span class="t" style="left:2580.0px;top:695.8px;font-size:26px;letter-spacing:-0.85px;color:#262626;-webkit-text-stroke:0.34px #262626;">Yes,I need graphs</span>
<svg class="a" style="left:2787.2px;top:687px" width="46" height="46" viewBox="0 0 46 46"><circle cx="23" cy="23" r="21" fill="#efefef" stroke="#dcdcdc" stroke-width="2.200"/></svg>
<span class="t" style="left:2854.5px;top:695.8px;font-size:26px;letter-spacing:0.08px;color:#262626;-webkit-text-stroke:0.34px #262626;">No,just alert</span>
<label class="t" style="left:2499.3px;top:789.9px;font-size:26px;letter-spacing:-0.39px;color:#262626;-webkit-text-stroke:0.34px #262626;">Data Type</label>
<svg class="a" style="left:2511px;top:839.2px" width="46" height="46" viewBox="0 0 46 46"><circle cx="23" cy="23" r="21" fill="#efefef" stroke="#dcdcdc" stroke-width="2.200"/><circle cx="23" cy="23" r="12" fill="#47bd7d"/></svg>
<span class="t" style="left:2579.5px;top:848.0px;font-size:26px;letter-spacing:0.37px;color:#262626;-webkit-text-stroke:0.34px #262626;">Integer</span>
<svg class="a" style="left:2674.9px;top:839.2px" width="46" height="46" viewBox="0 0 46 46"><circle cx="23" cy="23" r="21" fill="#efefef" stroke="#dcdcdc" stroke-width="2.200"/></svg>
<span class="t" style="left:2742.5px;top:848.0px;font-size:26px;letter-spacing:0.06px;color:#262626;-webkit-text-stroke:0.34px #262626;">Decimal</span>
<h3 class="t serif" style="left:2500.8px;top:977.1px;font-size:29px;letter-spacing:0.87px;color:#262626;-webkit-text-stroke:0.55px #262626;">Threshold details</h3>
<div class="a" style="left:2500px;top:1027.8px;width:1280px;height:2px;background:#ebebeb"></div>
<label class="t" style="left:2499.8px;top:1053.0px;font-size:26px;letter-spacing:-0.26px;color:#262626;-webkit-text-stroke:0.34px #262626;">Consecutive times</label>
<div class="a" style="left:2500px;top:1092.2px;width:614px;height:65.4px;background:#efefef;border:2px solid #dcdcdc"></div>
<span class="t" style="left:2519.2px;top:1111.7px;font-size:28px;color:#111;-webkit-text-stroke:0.36px #111;">1</span>
<span class="t" style="left:2810.5px;top:1201.3px;font-size:26px;letter-spacing:0.64px;color:#262626;-webkit-text-stroke:0.34px #262626;">Condition</span>
<span class="t" style="left:3123.0px;top:1201.3px;font-size:26px;letter-spacing:-0.28px;color:#262626;-webkit-text-stroke:0.34px #262626;">Threshold Value</span>
<span class="t" style="left:3432.8px;top:1201.3px;font-size:26px;letter-spacing:-0.81px;color:#262626;-webkit-text-stroke:0.34px #262626;">Message</span>
<label class="t" style="left:2500.8px;top:1321.9px;font-size:26px;letter-spacing:1.00px;color:#262626;-webkit-text-stroke:0.34px #262626;">Attention</label>
<div class="a" style="left:2812px;top:1304.2px;width:286px;height:65.4px;background:#efefef;border:2px solid #dcdcdc"></div>
<div class="a" style="left:3035.7px;top:1306.2px;width:2px;height:61.4px;background:#dcdcdc"></div>
<svg class="a" style="left:3057.400px;top:1331.6px" width="17" height="11" viewBox="0 0 17 11"><path d="M0 0h17l-8.500 11z" fill="#8a8a8a"/></svg>
<span class="t" style="left:2830.6px;top:1322.5px;font-size:24px;color:#333;-webkit-text-stroke:0.31px #333;">&gt;</span>
<div class="a" style="left:3122px;top:1304.2px;width:286px;height:65.4px;background:#efefef;border:2px solid #dcdcdc"></div>
<span class="t deja" style="left:3141.0px;top:1325.2px;font-size:24px;letter-spacing:-0.57px;color:#111;-webkit-text-stroke:0.3px #111;">30</span>
<div class="a" style="left:3434px;top:1304.2px;width:286px;height:65.4px;background:#efefef;border:2px solid #dcdcdc"></div>
<div class="a" style="left:3436px;top:1306.2px;width:266.2px;height:61px;overflow:hidden">
<span class="t deja" style="left:15.3px;top:19.0px;font-size:24px;letter-spacing:-0.40px;color:#111;-webkit-text-stroke:0.3px #111;">$MONITOR is $CURRENTVALUE%, threshold value for this monitor is $THRESHOLDVALUE%</span>
</div>
<label class="t" style="left:2500.8px;top:1427.9px;font-size:26px;letter-spacing:-0.09px;color:#262626;-webkit-text-stroke:0.34px #262626;">Trouble</label>
<div class="a" style="left:2812px;top:1410.2px;width:286px;height:65.4px;background:#efefef;border:2px solid #dcdcdc"></div>
<div class="a" style="left:3035.7px;top:1412.2px;width:2px;height:61.4px;background:#dcdcdc"></div>
<svg class="a" style="left:3057.400px;top:1437.6px" width="17" height="11" viewBox="0 0 17 11"><path d="M0 0h17l-8.500 11z" fill="#8a8a8a"/></svg>
<span class="t" style="left:2830.6px;top:1428.5px;font-size:24px;color:#333;-webkit-text-stroke:0.31px #333;">&gt;</span>
<div class="a" style="left:3122px;top:1410.2px;width:286px;height:65.4px;background:#efefef;border:2px solid #dcdcdc"></div>
<span class="t deja" style="left:3141.0px;top:1431.2px;font-size:24px;letter-spacing:-0.57px;color:#111;-webkit-text-stroke:0.3px #111;">35</span>
<div class="a" style="left:3434px;top:1410.2px;width:286px;height:65.4px;background:#efefef;border:2px solid #dcdcdc"></div>
<div class="a" style="left:3436px;top:1412.2px;width:266.2px;height:61px;overflow:hidden">
<span class="t deja" style="left:15.3px;top:19.0px;font-size:24px;letter-spacing:-0.40px;color:#111;-webkit-text-stroke:0.3px #111;">$MONITOR is $CURRENTVALUE%, threshold value for this monitor is $THRESHOLDVALUE%</span>
</div>
<label class="t" style="left:2499.8px;top:1533.9px;font-size:26px;letter-spacing:0.62px;color:#262626;-webkit-text-stroke:0.34px #262626;">Critical</label>
<div class="a" style="left:2812px;top:1516.2px;width:286px;height:65.4px;background:#efefef;border:2px solid #dcdcdc"></div>
<div class="a" style="left:3035.7px;top:1518.2px;width:2px;height:61.4px;background:#dcdcdc"></div>
<svg class="a" style="left:3057.400px;top:1543.6px" width="17" height="11" viewBox="0 0 17 11"><path d="M0 0h17l-8.500 11z" fill="#8a8a8a"/></svg>
<span class="t" style="left:2830.6px;top:1534.5px;font-size:24px;color:#333;-webkit-text-stroke:0.31px #333;">&gt;</span>
<div class="a" style="left:3122px;top:1516.2px;width:286px;height:65.4px;background:#efefef;border:2px solid #dcdcdc"></div>
<span class="t deja" style="left:3141.0px;top:1537.2px;font-size:24px;letter-spacing:-0.57px;color:#111;-webkit-text-stroke:0.3px #111;">40</span>
<div class="a" style="left:3434px;top:1516.2px;width:286px;height:65.4px;background:#efefef;border:2px solid #dcdcdc"></div>
<div class="a" style="left:3436px;top:1518.2px;width:266.2px;height:61px;overflow:hidden">
<span class="t deja" style="left:15.3px;top:19.0px;font-size:24px;letter-spacing:-0.40px;color:#111;-webkit-text-stroke:0.3px #111;">$MONITOR is $CURRENTVALUE%, threshold value for this monitor is $THRESHOLDVALUE%</span>
</div>
<label class="t" style="left:2498.8px;top:1639.9px;font-size:26px;letter-spacing:-0.04px;color:#262626;-webkit-text-stroke:0.34px #262626;">Rearm</label>
<div class="a" style="left:2812px;top:1622.2px;width:286px;height:65.4px;background:#f7f7f7;border:2px solid #ebebeb"></div>
<div class="a" style="left:3035.7px;top:1624.2px;width:2px;height:61.4px;background:#ebebeb"></div>
<svg class="a" style="left:3057.400px;top:1649.6px" width="17" height="11" viewBox="0 0 17 11"><path d="M0 0h17l-8.500 11z" fill="#c4c4c4"/></svg>
<span class="t" style="left:2830.0px;top:1640.5px;font-size:24px;letter-spacing:3.58px;color:#9a9a9a;-webkit-text-stroke:0.31px #9a9a9a;">&lt;=</span>
<div class="a" style="left:3122px;top:1622.2px;width:286px;height:65.4px;background:#fafafa;border:2px solid #d6d6d6"></div>
<span class="t deja" style="left:3141.0px;top:1643.2px;font-size:24px;letter-spacing:-0.57px;color:#111;-webkit-text-stroke:0.3px #111;">25</span>
<div class="a" style="left:3170.2px;top:1639.7px;width:2px;height:29.5px;background:#111"></div>
<div class="a" style="left:3434px;top:1622.2px;width:286px;height:65.4px;background:#efefef;border:2px solid #dcdcdc"></div>
<div class="a" style="left:3436px;top:1624.2px;width:266.2px;height:61px;overflow:hidden">
<span class="t deja" style="left:15.3px;top:19.0px;font-size:24px;letter-spacing:-0.27px;color:#111;-webkit-text-stroke:0.3px #111;">$MONITOR is now back to normal, current value is $CURRENTVALUE%</span>
</div>
<div class="a" style="left:2500px;top:1808px;width:1280px;height:2px;background:#ebebeb"></div>
<div class="a" style="left:3287.8px;top:1876px;width:240px;height:61.8px;background:#f2f2f2"></div>
<span class="t" style="left:3365.0px;top:1893.7px;font-size:28.5px;letter-spacing:-0.68px;color:#111;-webkit-text-stroke:0.37px #111;">Cancel</span>
<div class="a" style="left:3540px;top:1876px;width:240px;height:61.8px;background:#47bd7d"></div>
<span class="t" style="left:3630.7px;top:1893.7px;font-size:28.5px;letter-spacing:-2.27px;color:#fff;-webkit-text-stroke:0.8px #fff;">Save</span>
<div class="a" style="left:3707px;top:2177.1px;width:76px;height:70px;background:#252525;border-top:7.1px solid #000"></div>
<span class="t" style="left:3729.8px;top:2188.2px;font-size:29.5px;letter-spacing:-0.91px;color:#47bd7d;font-weight:700;">19</span>
<span class="t" style="left:3719.0px;top:2217.2px;font-size:17.5px;letter-spacing:-0.58px;color:#808080;-webkit-text-stroke:0.23px #808080;">Alarms</span>
</aside>
</body></html>
